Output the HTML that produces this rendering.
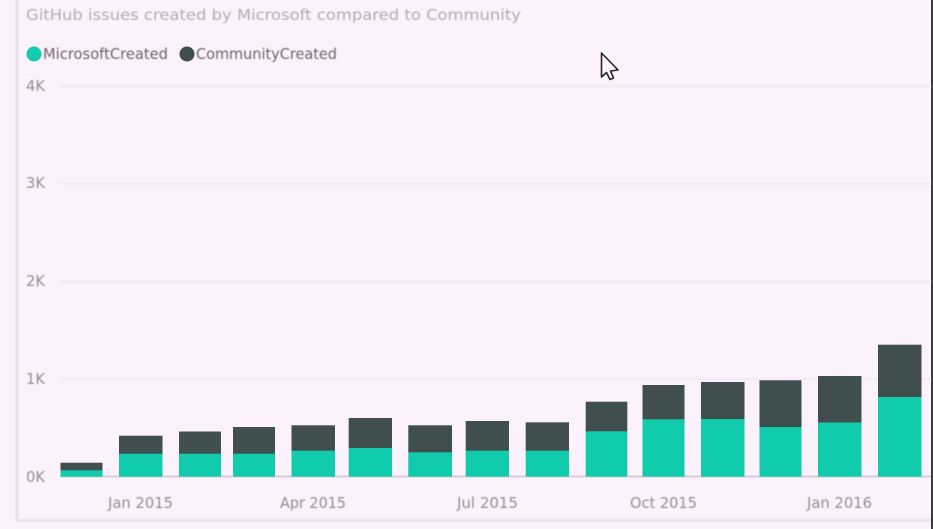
<!DOCTYPE html>
<html><head><meta charset="utf-8"><title>GitHub issues</title>
<style>
html,body{margin:0;padding:0;background:#fcf2fc;width:933px;height:529px;overflow:hidden}
svg{display:block;position:absolute;left:0;top:0}
text{font-family:"DejaVu Sans","Liberation Sans",sans-serif}
</style></head><body>
<svg width="933" height="529" viewBox="0 0 933 529" xmlns="http://www.w3.org/2000/svg">
<defs>
<filter id="b" color-interpolation-filters="sRGB" x="-5%" y="-20%" width="110%" height="140%"><feGaussianBlur stdDeviation="0.5"/></filter>
<filter id="s" color-interpolation-filters="sRGB" x="-2%" y="-2%" width="104%" height="104%"><feGaussianBlur stdDeviation="0.35"/></filter>
<filter id="g" color-interpolation-filters="sRGB" x="-2%" y="-50%" width="104%" height="200%"><feGaussianBlur stdDeviation="0.6"/></filter>
</defs>
<rect width="933" height="529" fill="#fcf2fc"/>
<g filter="url(#g)">
<rect x="15.8" y="0" width="2.6" height="521.5" fill="#e6dde6"/>
<rect x="15.8" y="519" width="915" height="2.6" fill="#e9e0e9"/>
</g>
<rect x="931" y="0" width="2" height="529" fill="#3c3a40"/>
<g fill="#f3e9f2" filter="url(#g)">
<rect x="60" y="85" width="871" height="2.2"/>
<rect x="60" y="182.5" width="871" height="2.2"/>
<rect x="60" y="280.5" width="871" height="2.2"/>
<rect x="60" y="378" width="871" height="2.2"/>
</g>
<rect x="60" y="475.5" width="871" height="2" fill="#d8ced6"/>
<g filter="url(#b)">
<text x="26" y="20" font-size="15.5" fill="#b3acb3" textLength="495" lengthAdjust="spacingAndGlyphs">GitHub issues created by Microsoft compared to Community</text>
<text x="43" y="59" font-size="15.5" fill="#6a666b" textLength="125" lengthAdjust="spacingAndGlyphs">MicrosoftCreated</text>
<text x="196" y="59" font-size="15.5" fill="#6a666b" textLength="141" lengthAdjust="spacingAndGlyphs">CommunityCreated</text>
<g font-size="15" fill="#938e94">
<text x="26" y="91" textLength="19" lengthAdjust="spacingAndGlyphs">4K</text>
<text x="26" y="188" textLength="19" lengthAdjust="spacingAndGlyphs">3K</text>
<text x="26" y="286" textLength="19" lengthAdjust="spacingAndGlyphs">2K</text>
<text x="26" y="384" textLength="19" lengthAdjust="spacingAndGlyphs">1K</text>
<text x="26" y="482" textLength="19" lengthAdjust="spacingAndGlyphs">0K</text>
<text x="108" y="508" textLength="65" lengthAdjust="spacingAndGlyphs">Jan 2015</text>
<text x="280" y="508" textLength="66" lengthAdjust="spacingAndGlyphs">Apr 2015</text>
<text x="457" y="508" textLength="61" lengthAdjust="spacingAndGlyphs">Jul 2015</text>
<text x="630" y="508" textLength="67" lengthAdjust="spacingAndGlyphs">Oct 2015</text>
<text x="807" y="508" textLength="65" lengthAdjust="spacingAndGlyphs">Jan 2016</text>
</g>
</g>
<g filter="url(#s)">
<circle cx="34" cy="54" r="7.5" fill="#12cdae"/>
<circle cx="187" cy="54" r="7.5" fill="#404f4e"/>
<g fill="#404f4e">
<rect x="60.5" y="462.7" width="42" height="8"/>
<rect x="119" y="435.7" width="43.5" height="18.5"/>
<rect x="179" y="431.5" width="42" height="22.7"/>
<rect x="233" y="427" width="42" height="27.2"/>
<rect x="291.5" y="425.3" width="43.5" height="25.9"/>
<rect x="348.7" y="418" width="43.3" height="30.5"/>
<rect x="408.3" y="425.3" width="43.7" height="27.5"/>
<rect x="465.7" y="421" width="43.3" height="30.2"/>
<rect x="525.7" y="422.3" width="43.3" height="28.9"/>
<rect x="585.7" y="401.7" width="41.6" height="30.1"/>
<rect x="642.5" y="385" width="42" height="34.8"/>
<rect x="701" y="382" width="43.5" height="37.5"/>
<rect x="759.5" y="380.3" width="42" height="47.2"/>
<rect x="818" y="376" width="43.5" height="47"/>
<rect x="878" y="344.7" width="43.5" height="52.8"/>
</g>
<g fill="#10cbac">
<rect x="60.5" y="470.3" width="42" height="6.4"/>
<rect x="119" y="453.7" width="43.5" height="23"/>
<rect x="179" y="453.7" width="42" height="23"/>
<rect x="233" y="453.7" width="42" height="23"/>
<rect x="291.5" y="450.7" width="43.5" height="26"/>
<rect x="348.7" y="448" width="43.3" height="28.7"/>
<rect x="408.3" y="452.3" width="43.7" height="24.4"/>
<rect x="465.7" y="450.7" width="43.3" height="26"/>
<rect x="525.7" y="450.7" width="43.3" height="26"/>
<rect x="585.7" y="431.3" width="41.6" height="45.4"/>
<rect x="642.5" y="419.3" width="42" height="57.4"/>
<rect x="701" y="419" width="43.5" height="57.7"/>
<rect x="759.5" y="427" width="42" height="49.7"/>
<rect x="818" y="422.5" width="43.5" height="54.2"/>
<rect x="878" y="397" width="43.5" height="79.7"/>
</g>
<path d="M601.5 53 L601.5 77 L606.5 72.5 L610 79.5 L613.5 78 L610.5 71 L618 70 Z" fill="#fdf6fd" stroke="#26262a" stroke-width="1.6" stroke-linejoin="round"/>
</g>
</svg>
</body></html>
